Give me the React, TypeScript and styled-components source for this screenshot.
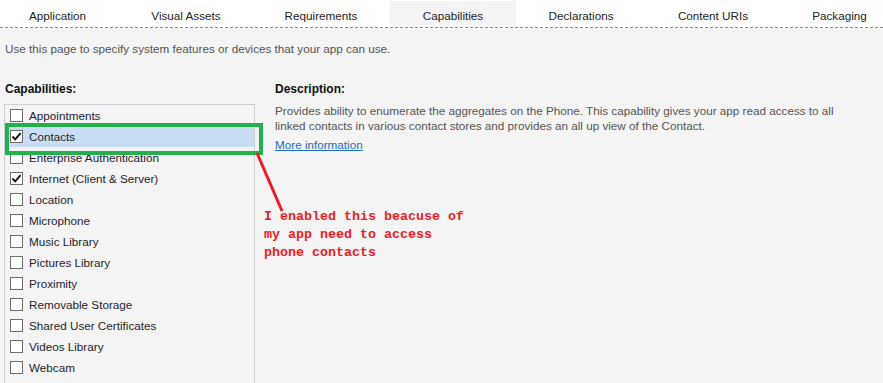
import React from 'react';
import styled, { createGlobalStyle } from 'styled-components';

const GlobalStyle = createGlobalStyle`
  html, body {
    margin: 0;
    padding: 0;
    background: #f4f4f4;
    overflow: hidden;
  }
  body {
    font-family: 'Liberation Sans', Arial, sans-serif;
    font-size: 11.7px;
    color: #1e1e1e;
  }
`;

const Page = styled.div`
  position: relative;
  width: 883px;
  height: 383px;
  overflow: hidden;
  background: #f4f4f4;
`;

const TabBar = styled.nav`
  display: flex;
  height: 28px;
  background: #fff;
  border-bottom: 1px dashed #8a8a8a;
  padding-top: 1px;
  box-sizing: border-box;
  margin-left: -5px;
`;

const Tab = styled.div<{ $width: number; $active?: boolean }>`
  flex: none;
  width: ${(p) => p.$width}px;
  height: 24px;
  padding-top: 4px;
  box-sizing: border-box;
  display: flex;
  align-items: center;
  justify-content: center;
  background: ${(p) => (p.$active ? '#f4f4f4' : 'transparent')};
  color: #1e1e1e;
  white-space: nowrap;
`;

const Body = styled.div`
  padding: 0 0 0 5px;
`;

const Intro = styled.p`
  margin: 0;
  padding-top: 13px;
  line-height: 16px;
  color: #555;
`;

const Columns = styled.div`
  display: flex;
  margin-top: 24px;
`;

const LeftCol = styled.div`
  width: 251px;
  margin-left: -1px;
  flex: none;
`;

const RightCol = styled.div`
  margin-left: 19px;
  flex: 1;
`;

const Heading = styled.h3<{ $gap: number }>`
  margin: 0 0 ${(p) => p.$gap}px 1px;
  font-size: 12px;
  font-weight: bold;
  line-height: 16px;
  color: #111;
`;

const ListBox = styled.ul`
  list-style: none;
  margin: 0;
  padding: 0;
  border: 1px solid #ccced6;
  height: 300px;
  box-sizing: border-box;
`;

const Row = styled.li<{ $selected?: boolean }>`
  display: flex;
  align-items: center;
  height: 21px;
  padding-left: 5px;
  gap: 6px;
  background: ${(p) => (p.$selected ? '#c9def5' : 'transparent')};
  color: #1e1e2e;
  white-space: nowrap;
`;

const Box = styled.span`
  width: 13px;
  height: 13px;
  box-sizing: border-box;
  border: 1px solid #6d6d6d;
  background: #fff;
  display: flex;
  align-items: center;
  justify-content: center;
  flex: none;
`;

const Description = styled.p`
  margin: 0 0 0 1px;
  line-height: 15px;
  color: #555;
`;

const MoreLink = styled.a`
  display: inline-block;
  margin: 4px 0 0 1px;
  line-height: 16px;
  color: #1a6fc4;
  text-decoration: underline;
`;

const Highlight = styled.div`
  position: absolute;
  left: 5px;
  top: 123px;
  width: 258px;
  height: 32px;
  box-sizing: border-box;
  border: 4px solid #22b14c;
`;

const Pointer = styled.svg`
  position: absolute;
  left: 250px;
  top: 148px;
`;

const Note = styled.div`
  position: absolute;
  left: 264px;
  top: 208px;
  font-family: 'Liberation Mono', 'Courier New', monospace;
  font-weight: bold;
  font-size: 13.33px;
  line-height: 18px;
  color: #ed1c24;
  white-space: pre;
`;

const tabs = [
  { label: 'Application', width: 125 },
  { label: 'Visual Assets', width: 132 },
  { label: 'Requirements', width: 138 },
  { label: 'Capabilities', width: 126, active: true },
  { label: 'Declarations', width: 130 },
  { label: 'Content URIs', width: 134 },
  { label: 'Packaging', width: 119 }
];

const capabilities = [
  { name: 'Appointments' },
  { name: 'Contacts', checked: true, selected: true },
  { name: 'Enterprise Authentication' },
  { name: 'Internet (Client & Server)', checked: true },
  { name: 'Location' },
  { name: 'Microphone' },
  { name: 'Music Library' },
  { name: 'Pictures Library' },
  { name: 'Proximity' },
  { name: 'Removable Storage' },
  { name: 'Shared User Certificates' },
  { name: 'Videos Library' },
  { name: 'Webcam' }
];

const Check: React.FC<{ checked?: boolean }> = ({ checked }) => (
  <Box>
    {checked && (
      <svg width="11" height="11" viewBox="0 0 11 11">
        <path d="M1.5 5.5 L4.2 8.3 L9.6 2.2" fill="none" stroke="#111" strokeWidth="1.9" />
      </svg>
    )}
  </Box>
);

const App: React.FC = () => (
  <Page>
    <GlobalStyle />
    <TabBar>
      {tabs.map((t) => (
        <Tab key={t.label} $width={t.width} $active={t.active}>
          {t.label}
        </Tab>
      ))}
    </TabBar>
    <Body>
      <Intro>Use this page to specify system features or devices that your app can use.</Intro>
      <Columns>
        <LeftCol>
          <Heading $gap={7}>Capabilities:</Heading>
          <ListBox>
            {capabilities.map((c) => (
              <Row key={c.name} $selected={c.selected}>
                <Check checked={c.checked} />
                {c.name}
              </Row>
            ))}
          </ListBox>
        </LeftCol>
        <RightCol>
          <Heading $gap={6}>Description:</Heading>
          <Description>
            Provides ability to enumerate the aggregates on the Phone. This capability gives your app read access to all
            <br />
            linked contacts in various contact stores and provides an all up view of the Contact.
          </Description>
          <MoreLink href="#">More information</MoreLink>
        </RightCol>
      </Columns>
    </Body>
    <Highlight />
    <Pointer width="40" height="70" viewBox="0 0 40 70">
      <line x1="7" y1="5" x2="32" y2="63" stroke="#ed1c24" strokeWidth="3" />
    </Pointer>
    <Note>{'I enabled this beacuse of\nmy app need to access\nphone contacts'}</Note>
  </Page>
);

export default App;
